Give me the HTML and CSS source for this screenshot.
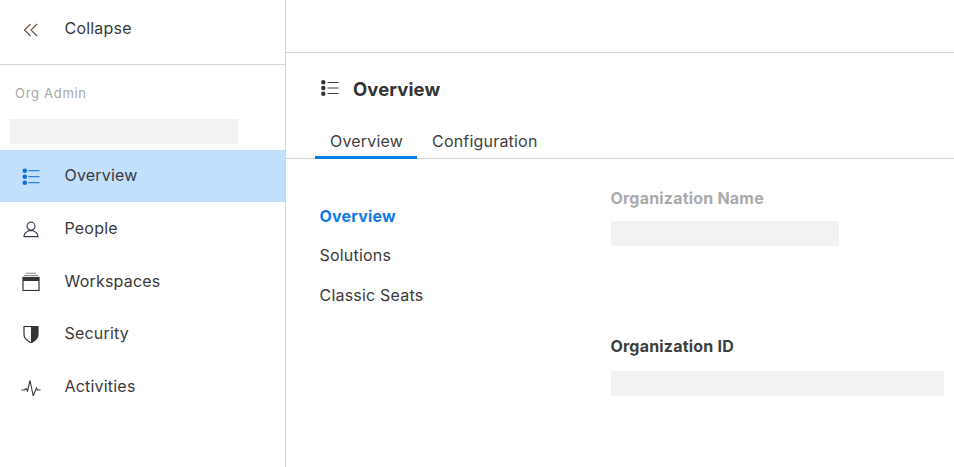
FILE: index.html
```html
<!DOCTYPE html>
<html lang="en">
<head>
<meta charset="utf-8">
<title>Overview</title>
<link rel="stylesheet" href="styles.css">
</head>
<body>
<div class="app">
  <aside class="sidebar">
    <div class="collapse">
      <svg class="icon" viewBox="0 0 20 20"><path d="M9.500 6 3.500 12l6 6M16 6l-6 6 6 6" fill="none" stroke="#6a5236" stroke-width="1.100"/></svg>
      <span>Collapse</span>
    </div>
    <div class="org-label">Org Admin</div>
    <div class="skeleton org-skeleton"></div>
    <nav class="nav">
      <a class="nav-item active">
        <svg class="icon" viewBox="0 0 20 20"><g fill="#0f6fde"><circle cx="3.800" cy="5.700" r="2.300"/><circle cx="3.800" cy="11.700" r="2.300"/><circle cx="3.800" cy="17.700" r="2.300"/></g><path d="M7.500 5.700h11M7.500 11.700h11M7.500 17.700h11" stroke="#2c7fdc" stroke-width="1.200"/></svg>
        <span>Overview</span>
      </a>
      <a class="nav-item">
        <svg class="icon" viewBox="0 0 20 20"><circle cx="10" cy="8.200" r="4" fill="none" stroke="#5a3a6a" stroke-width="1.200"/><path d="M3 18.700c0-2.700 2.200-5 5-6h4c2.800 1 5 3.300 5 6z" fill="none" stroke="#3a3a50" stroke-width="1.200"/></svg>
        <span>People</span>
      </a>
      <a class="nav-item">
        <svg class="icon" viewBox="0 0 20 20"><path d="M5 2.300h10" stroke="#999" stroke-width="1.200"/><path d="M3 4.500h14" stroke="#888" stroke-width="1"/><rect x="2" y="6.500" width="16" height="13" fill="none" stroke="#333" stroke-width="1.200"/><rect x="2" y="6.500" width="16" height="3.500" fill="#333"/></svg>
        <span>Workspaces</span>
      </a>
      <a class="nav-item">
        <svg class="icon" viewBox="0 0 20 20"><path d="M3 3.500h14v8c0 4-3 6.300-7 8.300-4-2-7-4.300-7-8.300z" fill="none" stroke="#333" stroke-width="1.200"/><path d="M10 3.500h7v8c0 4-3 6.300-7 8.300z" fill="#333"/></svg>
        <span>Security</span>
      </a>
      <a class="nav-item">
        <svg class="icon" viewBox="0 0 20 20"><path d="M.5 14h3l1.500-1.500 1.500 2.500L9 4.500l3.200 15.300 3.300-7.800 1 2h3" fill="none" stroke="#3a3a3a" stroke-width="1.100"/></svg>
        <span>Activities</span>
      </a>
    </nav>
  </aside>
  <main class="main">
    <div class="topbar"></div>
    <header class="page-title">
      <svg class="title-icon" viewBox="0 0 18 16"><g fill="#333"><circle cx="2.300" cy="2.300" r="2.200"/><circle cx="2.300" cy="8" r="2.200"/><circle cx="2.300" cy="13.700" r="2.200"/></g><path d="M6.500 2.500h11M6.500 8h11M6.500 13.500h11" stroke="#444" stroke-width="1"/></svg>
      <h1>Overview</h1>
    </header>
    <div class="tabs">
      <div class="tab selected">Overview</div>
      <div class="tab">Configuration</div>
    </div>
    <div class="content">
      <ul class="section-list">
        <li class="current">Overview</li>
        <li>Solutions</li>
        <li>Classic Seats</li>
      </ul>
      <div class="details">
        <div class="field-label muted">Organization Name</div>
        <div class="skeleton name-skeleton"></div>
        <div class="field-label id-label">Organization ID</div>
        <div class="skeleton id-skeleton"></div>
      </div>
    </div>
  </main>
</div>
</body>
</html>
```

FILE: styles.css
```css
* { box-sizing: border-box; }
html, body { margin: 0; height: 100%; background: #fff; overflow: hidden; }
body { font-family: "Inter", "Noto Sans", sans-serif; font-size: 16px; letter-spacing: .2px; color: #3a3a3a; }
.app { display: flex; height: 467px; width: 954px; }
.sidebar { width: 286px; flex: none; border-right: 1px solid #d4d4d4; }
.icon { width: 20px; height: 20px; flex: none; margin-right: 24px; display: block; }
.collapse { display: flex; align-items: center; height: 65px; padding: 0 0 9px 20.500px; border-bottom: 1px solid #d4d4d4; }
.org-label { margin: 19px 0 0 15px; font-size: 13px; line-height: 18px; letter-spacing: .7px; color: #a8a8a8; }
.skeleton { background: #f2f2f2; height: 25px; }
.org-skeleton { width: 228px; margin: 17px 0 6px 10px; }
.nav { display: flex; flex-direction: column; }
.nav-item { display: flex; align-items: center; height: 52.600px; padding: 0 0 .6px 20.500px; }
.nav-item.active { background: #c1e0fe; height: 52px; padding-bottom: 2px; }
.main { flex: 1; min-width: 0; }
.topbar { height: 53px; border-bottom: 1px solid #d4d4d4; }
.page-title { display: flex; align-items: center; height: 24px; margin-top: 24px; padding-left: 35px; }
.title-icon { width: 18px; height: 16px; margin-right: 14px; margin-top: -2px; display: block; }
h1 { margin: 0; font-size: 18.500px; font-weight: 700; letter-spacing: .1px; color: #333; line-height: 24px; }
.tabs { display: flex; height: 40px; margin-top: 18px; border-bottom: 1px solid #d4d4d4; padding-left: 29px; }
.tab { padding: 10px 15px 0; line-height: 24px; height: 40px; color: #3f3f3f; }
.tab.selected { width: 102px; border-bottom: 3px solid #0a7fe6; }
.content { display: flex; }
.section-list { list-style: none; margin: 45px 0 0 33.500px; padding: 0; width: 291px; line-height: 24px; }
.section-list li { margin-bottom: 15.400px; color: #3a3a3a; }
.section-list li.current { color: #0f7be6; font-weight: 700; }
.details { flex: 1; padding-top: 27px; }
.field-label { font-weight: 700; line-height: 24px; color: #3d3d3d; }
.muted { color: #ababab; }
.name-skeleton { width: 228px; margin-top: 11px; }
.id-label { margin-top: 88px; }
.id-skeleton { width: 333px; margin-top: 13px; }
```
